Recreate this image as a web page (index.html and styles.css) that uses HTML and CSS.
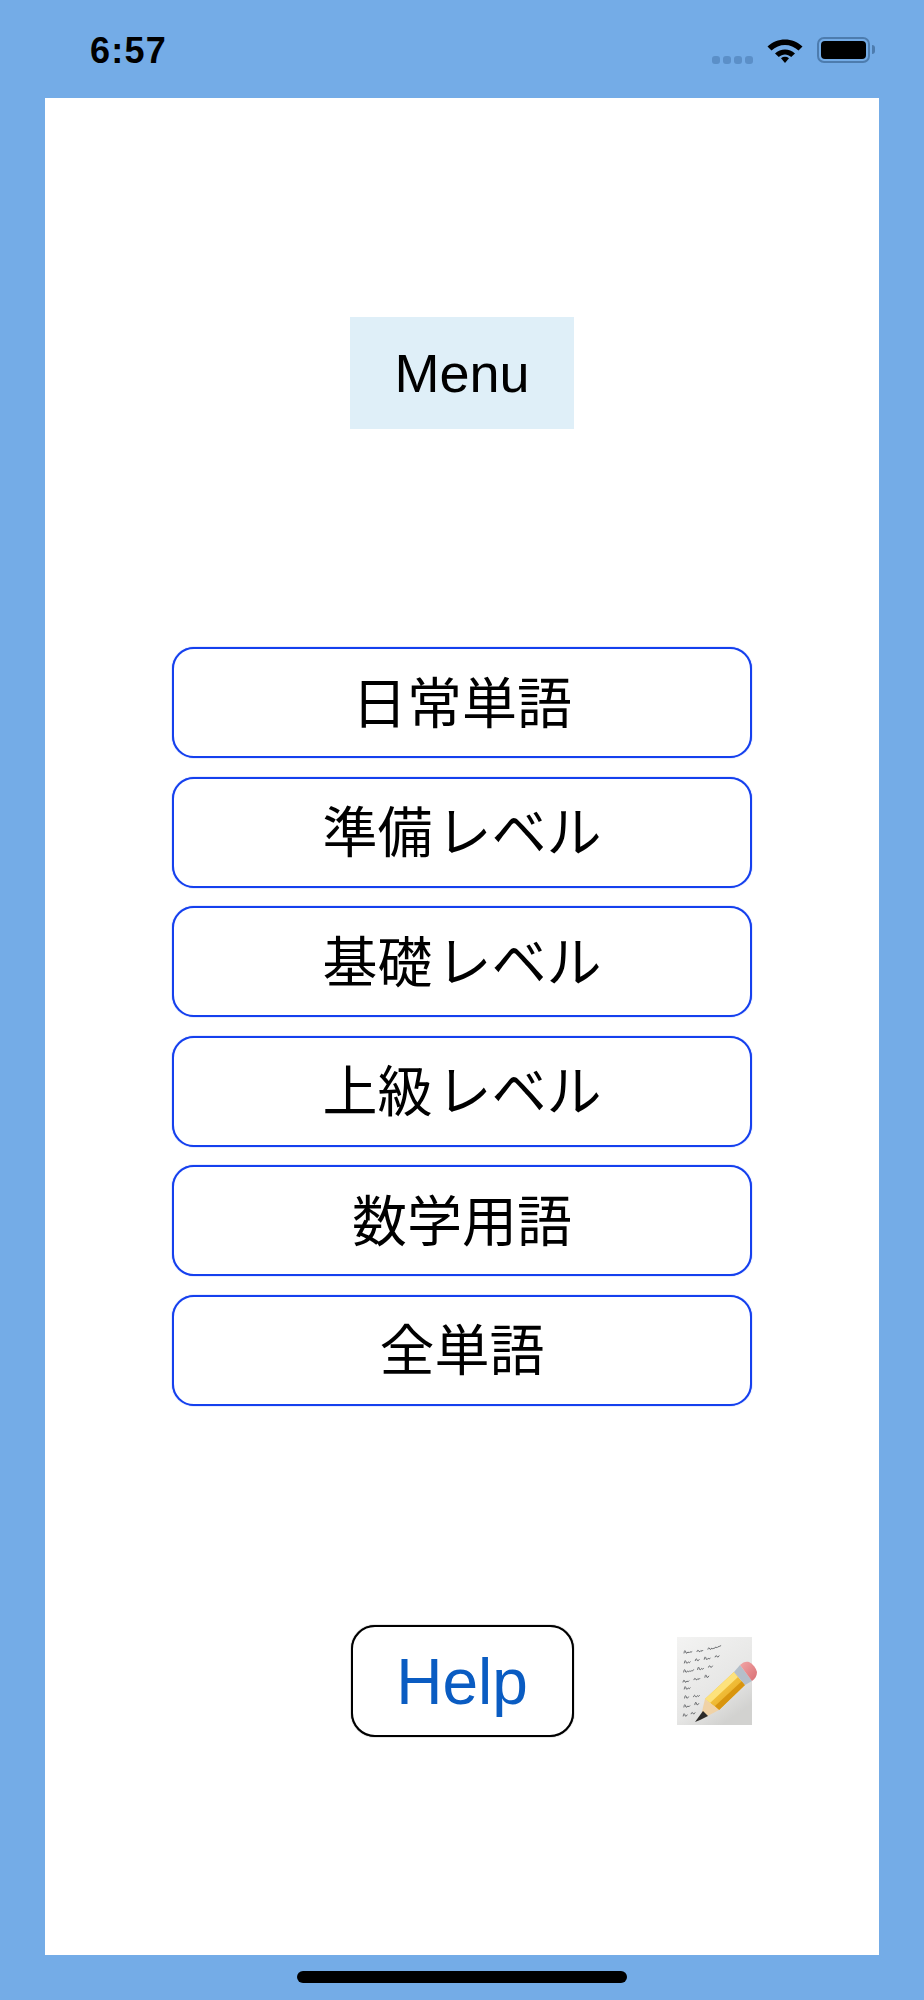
FILE: index.html
```html
<!DOCTYPE html>
<html lang="ja">
<head>
    <meta charset="UTF-8">
    <meta name="viewport" content="width=device-width, initial-scale=1.0">
    <title>Menu</title>
    <link rel="stylesheet" href="styles.css">
</head>
<body>
    <header class="status-bar">
        <span class="clock">6:57</span>
        <div class="status-icons">
            <div class="signal"><i></i><i></i><i></i><i></i></div>
            <svg class="wifi" viewBox="0 0 36 26" width="36" height="26">
                <path d="M0.5 9.5C10 0 26 0 35.5 9.5L31.5 13.5C24 6 12 6 4.5 13.5Z" fill="#000"/>
                <path d="M8 16.5C13.5 11 22.5 11 28 16.5L24.2 20C20.6 16.6 15.4 16.6 11.8 20Z" fill="#000"/>
                <path d="M14 21.2C16.4 19.4 19.6 19.4 22 21.2L18 26Z" fill="#000"/>
            </svg>
            <div class="battery"><div class="battery-level"></div></div>
            <div class="battery-nub"></div>
        </div>
    </header>

    <main class="panel">
        <div class="menu-title">Menu</div>

        <div class="level-list">
            <button class="level-btn">日常単語</button>
            <button class="level-btn">準備<span class="kana">レベル</span></button>
            <button class="level-btn">基礎<span class="kana">レベル</span></button>
            <button class="level-btn">上級<span class="kana">レベル</span></button>
            <button class="level-btn">数学用語</button>
            <button class="level-btn">全単語</button>
        </div>

        <div class="bottom-row">
            <button class="help-btn">Help</button>
            <svg class="memo" viewBox="0 0 75 88" width="75" height="88">
                <defs>
                    <linearGradient id="paper" x1="0" y1="0" x2="0.6" y2="1">
                        <stop offset="0" stop-color="#f3f3f2"/>
                        <stop offset="0.7" stop-color="#e6e6e5"/>
                        <stop offset="1" stop-color="#d2d2d0"/>
                    </linearGradient>
                    <linearGradient id="wood" x1="0" y1="0" x2="1" y2="1">
                        <stop offset="0" stop-color="#fcd452"/>
                        <stop offset="1" stop-color="#e3a31a"/>
                    </linearGradient>
                    <linearGradient id="rubber" x1="0" y1="0" x2="1" y2="1">
                        <stop offset="0" stop-color="#f2a6a6"/>
                        <stop offset="1" stop-color="#d96f74"/>
                    </linearGradient>
                </defs>
                <rect width="75" height="88" fill="url(#paper)"/>
                <g class="scribble" fill="none" stroke="#55585b" stroke-width="0.8" stroke-linecap="round">
                    <path d="M8 15q1-5 2 0q1 1 2-1q1 2 2 0q1 1 2 0m5 0q1-3 2 0q1 1 2-1q1 2 2 0m5-1q1-3 2 0q1 1 2-1q1 2 2 0q1 1 2-1q1 2 2 0q1 0 3-1"/>
                    <path d="M8 25q1-5 2 0q1 1 2-1q1 2 2 0m5-1q1-4 2 0q1 1 2-1m5 0q1-5 2 0q1 1 2-1q1 2 2 0m5-1q1-3 2 0q1 1 2-1"/>
                    <path d="M7 34q1-5 2 0q1 1 2-1q1 2 2 0q1 1 2 0q1 1 2-1m4 0q1-5 2 0q1 1 2-1q1 2 2 0m5-1q1-3 2 0q1 1 2-1"/>
                    <path d="M6 44q1-4 2 0q1 1 2-1q1 2 2 0m5-1q1-3 2 0q1 1 2-1q1 2 2 0m5-1q1-5 2 0q1 1 2-1"/>
                    <path d="M7 51q1-5 2 0q1 1 2-1q1 2 2 0"/>
                    <path d="M7 60q1-5 2 0q1 1 2-1m5 0q1-3 2 0q1 1 2-1q1 2 2 0"/>
                    <path d="M6 69q1-5 2 0q1 1 2-1q1 2 2 0m5-1q1-5 2 0q1 1 2-1"/>
                    <path d="M5 78q1-5 2 0q1 1 2-1m4-1q1-3 2 0q1 1 2-1"/>
                </g>
                <path d="M28 62L57 35L68 48L42 73Z" fill="url(#wood)"/>
                <path d="M28 62L57 35L61 40L33 66Z" fill="#fde27c"/>
                <path d="M42 73L68 48L65 44L38 69Z" fill="#d8950f"/>
                <path d="M28 62L42 73L23 83Z" fill="#f0d2a6"/>
                <path d="M26 74L31 79L23 83L18 85Z" fill="#2c2a28"/>
                <path d="M57 35L63 28L75 44L68 48Z" fill="#b4bfca"/>
                <path d="M63 28C66 25 69 24 72 25C76 27 79 31 80 35C80 39 78 42 75 44Z" fill="url(#rubber)"/>
            </svg>
        </div>
    </main>

    <footer class="home-area">
        <div class="home-bar"></div>
    </footer>
</body>
</html>
```

FILE: styles.css
```css
body {
    margin: 0;
    min-height: 2000px;
    display: flex;
    flex-direction: column;
    background-color: #74ace7;
    color: #000;
    font-family: "Liberation Sans", "Noto Sans CJK JP", sans-serif;
}

.status-bar {
    height: 98px;
    padding: 0 49px 0 90px;
    box-sizing: border-box;
    display: flex;
    justify-content: space-between;
    align-items: flex-start;
}

.clock {
    margin-top: 30px;
    font-size: 36px;
    font-weight: bold;
    line-height: 41px;
    letter-spacing: 1.2px;
}

.status-icons {
    margin-top: 37px;
    display: flex;
    align-items: flex-start;
}

.signal {
    margin: 19px 14px 0 0;
    display: flex;
    gap: 3px;
}

.signal i {
    width: 8px;
    height: 8px;
    border-radius: 3px;
    background-color: #5b8fc8;
}

.wifi {
    display: block;
}

.battery {
    margin-left: 14px;
    width: 53px;
    height: 26px;
    padding: 2px;
    box-sizing: border-box;
    border: 2px solid #4d7cae;
    border-radius: 7px;
}

.battery-level {
    height: 100%;
    background-color: #000;
    border-radius: 4px;
}

.battery-nub {
    margin: 8px 0 0 2px;
    width: 3px;
    height: 9px;
    background-color: #4d7cae;
    border-radius: 0 3px 3px 0;
}

.panel {
    flex-grow: 1;
    margin: 0 45px;
    padding: 219px 127px 0;
    background-color: #fff;
    display: flex;
    flex-direction: column;
    align-items: center;
}

.menu-title {
    width: 224px;
    height: 112px;
    background-color: #dfeff8;
    display: flex;
    align-items: center;
    justify-content: center;
    font-size: 54px;
}

.level-list {
    width: 100%;
    margin-top: 218px;
    display: flex;
    flex-direction: column;
    gap: 18.6px;
}

.level-btn {
    height: 111px;
    padding: 0 0 8px;
    background-color: #fff;
    border: 2px solid #1540ee;
    border-radius: 22px;
    box-shadow: 0 0 1px #1540ee;
    color: #000;
    font-family: inherit;
    font-size: 55px;
}

.kana {
    margin-left: 4px;
}

.bottom-row {
    width: 100%;
    margin-top: 219px;
    display: grid;
    grid-template-columns: 1fr auto 1fr;
    align-items: center;
}

.help-btn {
    grid-column: 2;
    width: 223px;
    height: 112px;
    padding: 2px 0 0;
    background-color: #fff;
    border: 2px solid #000;
    border-radius: 24px;
    box-shadow: 0 0 1px #000;
    color: #0a5cc2;
    font-family: inherit;
    font-size: 64px;
}

.memo {
    grid-column: 3;
    justify-self: end;
    display: block;
    overflow: visible;
}

.scribble {
    transform: rotate(-2deg);
    transform-origin: 37px 44px;
}

.home-area {
    height: 45px;
    padding-top: 16px;
    box-sizing: border-box;
    display: flex;
    justify-content: center;
}

.home-bar {
    width: 330px;
    height: 12px;
    background-color: #000;
    border-radius: 6px;
}
```
